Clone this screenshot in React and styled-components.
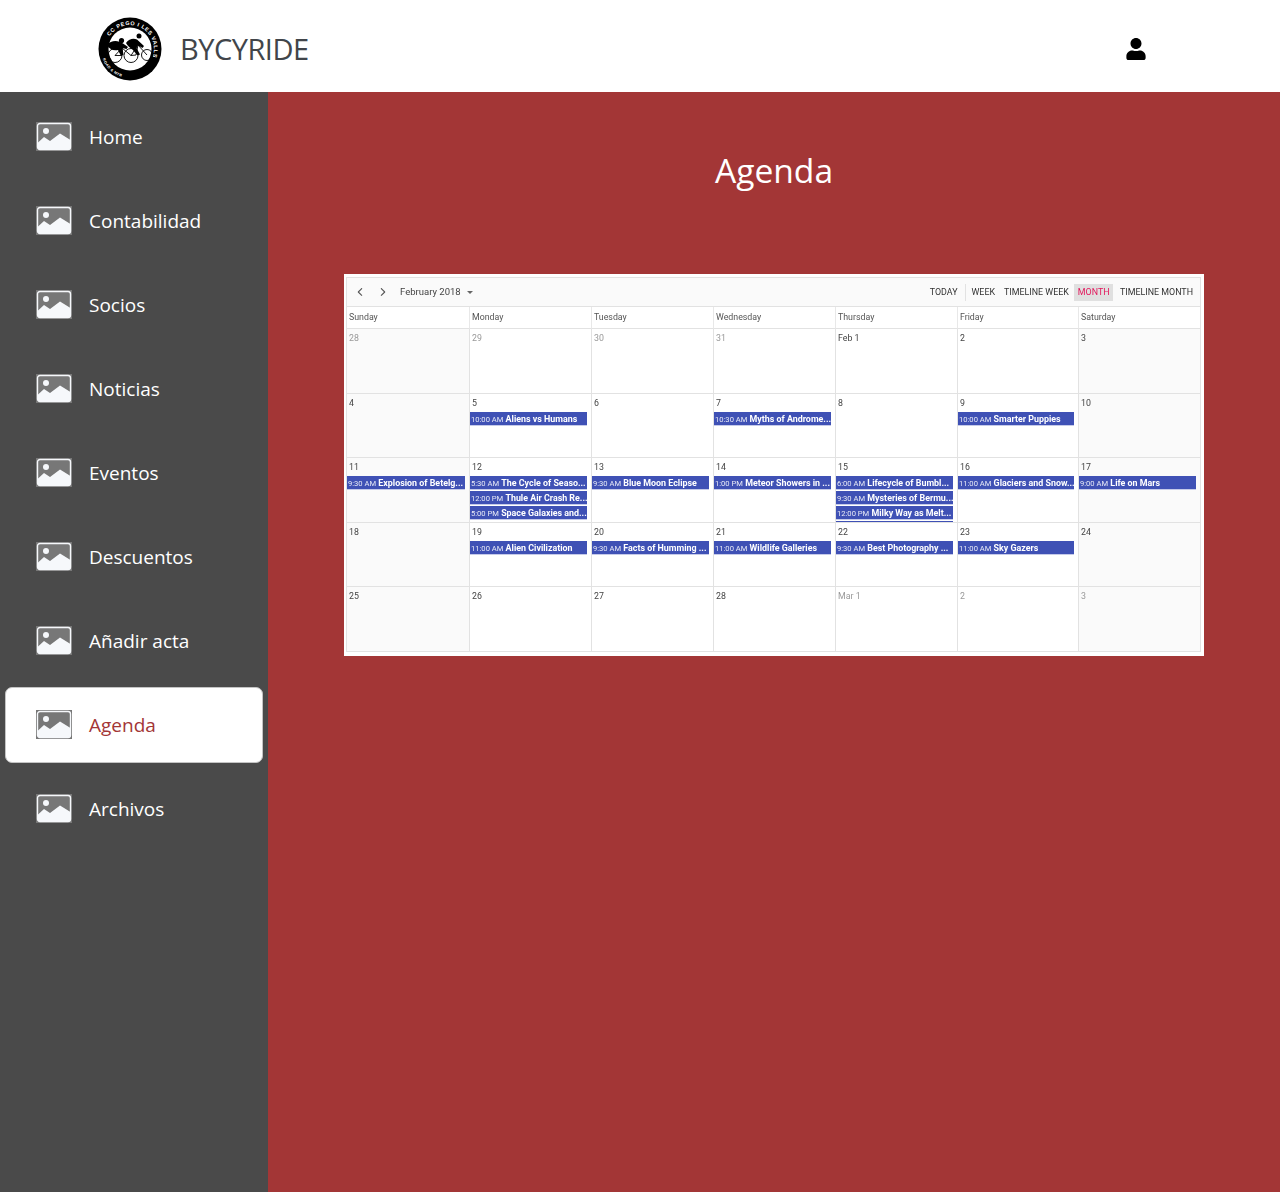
// Agenda page of the BYCYRIDE club admin
import React from "react";
import styled, { createGlobalStyle } from "styled-components";
import { FaUser } from "react-icons/fa";
import { IoIosArrowBack, IoIosArrowForward } from "react-icons/io";

const GlobalStyle = createGlobalStyle`
  html, body {
    margin: 0;
    padding: 0;
    background: #a33636;
    font-family: "Open Sans", "Noto Sans", sans-serif;
  }
  * {
    box-sizing: border-box;
  }
`;

const NAV_ITEMS = [
  "Home",
  "Contabilidad",
  "Socios",
  "Noticias",
  "Eventos",
  "Descuentos",
  "Añadir acta",
  "Agenda",
  "Archivos",
];

const WEEK_DAYS = ["Sunday", "Monday", "Tuesday", "Wednesday", "Thursday", "Friday", "Saturday"];

const VIEWS = ["WEEK", "TIMELINE WEEK", "MONTH", "TIMELINE MONTH"];

const WEEKS = [
  [
    { day: "28", muted: true },
    { day: "29", muted: true },
    { day: "30", muted: true },
    { day: "31", muted: true },
    { day: "Feb 1" },
    { day: "2" },
    { day: "3" },
  ],
  [
    { day: "4" },
    { day: "5", events: [["10:00 AM", "Aliens vs Humans"]] },
    { day: "6" },
    { day: "7", events: [["10:30 AM", "Myths of Androme..."]] },
    { day: "8" },
    { day: "9", events: [["10:00 AM", "Smarter Puppies"]] },
    { day: "10" },
  ],
  [
    { day: "11", events: [["9:30 AM", "Explosion of Betelg..."]] },
    {
      day: "12",
      events: [
        ["5:30 AM", "The Cycle of Seaso..."],
        ["12:00 PM", "Thule Air Crash Re..."],
        ["5:00 PM", "Space Galaxies and..."],
      ],
    },
    { day: "13", events: [["9:30 AM", "Blue Moon Eclipse"]] },
    { day: "14", events: [["1:00 PM", "Meteor Showers in ..."]] },
    {
      day: "15",
      events: [
        ["6:00 AM", "Lifecycle of Bumbl..."],
        ["9:30 AM", "Mysteries of Bermu..."],
        ["12:00 PM", "Milky Way as Melt..."],
        ["", ""],
      ],
    },
    { day: "16", events: [["11:00 AM", "Glaciers and Snow..."]] },
    { day: "17", events: [["9:00 AM", "Life on Mars"]] },
  ],
  [
    { day: "18" },
    { day: "19", events: [["11:00 AM", "Alien Civilization"]] },
    { day: "20", events: [["9:30 AM", "Facts of Humming ..."]] },
    { day: "21", events: [["11:00 AM", "Wildlife Galleries"]] },
    { day: "22", events: [["9:30 AM", "Best Photography ..."]] },
    { day: "23", events: [["11:00 AM", "Sky Gazers"]] },
    { day: "24" },
  ],
  [
    { day: "25" },
    { day: "26" },
    { day: "27" },
    { day: "28" },
    { day: "Mar 1", muted: true },
    { day: "2", muted: true },
    { day: "3", muted: true },
  ],
];

const PictureIcon = () => (
  <IconSvg viewBox="0 0 36 29">
    <rect width="36" height="29" fill="#777" />
    <rect x="1.5" y="1.5" width="33" height="26" rx="2.5" fill="none" stroke="#f6f8fb" strokeWidth="1.4" />
    <circle cx="10" cy="9" r="3" fill="#f6f8fb" />
    <path
      d="M1.5 21 L8 15 L14 19 L24 11.5 L34.5 18 V25 a2.5 2.5 0 0 1 -2.5 2.5 H4 a2.5 2.5 0 0 1 -2.5 -2.5 Z"
      fill="#f6f8fb"
    />
  </IconSvg>
);

const ClubLogo = () => (
  <LogoSvg viewBox="0 0 64 64">
    <defs>
      <path id="ringTop" d="M 11.65 19.28 A 24 24 0 1 1 51.66 45.77" />
      <path id="ringBottom" d="M 4.75 41.9 A 29 29 0 0 0 29.5 60.9" />
    </defs>
    <circle cx="32" cy="32" r="31.5" fill="#000" />
    <circle cx="32" cy="32" r="21.5" fill="#fff" />
    <text fontFamily="Liberation Sans, sans-serif" fontSize="5.4" fontWeight="700" fill="#fff" letterSpacing="0.6">
      <textPath href="#ringTop">CC PEGO I LES VALLS</textPath>
    </text>
    <text fontFamily="Liberation Sans, sans-serif" fontSize="3.6" fontWeight="700" fill="#fff" letterSpacing="0.4">
      <textPath href="#ringBottom">ROAD &amp; MTB</textPath>
    </text>
    <g fill="none" stroke="#000" strokeWidth="0.9">
      <circle cx="17" cy="38.5" r="7" />
      <circle cx="33" cy="38.5" r="7" />
      <circle cx="49" cy="38" r="5.5" />
      <path d="M17 38.5 L24 31 L33 38.5 M24 31 L24 38.5 L17 38.5" />
      <path d="M33 38.5 L40 28 L49 38 M40 28 L38 38 L33 38.5" />
    </g>
    <g fill="#000">
      <circle cx="23.5" cy="23.5" r="2.6" />
      <circle cx="41" cy="19" r="2.5" />
      <path d="M9 28 C13 23 20 23 25 26.5 L30 30 L28.5 32 L24.5 31 L25.5 38 L22.5 38 L20 33 C15 34 11 32 9 28 Z" />
      <path d="M28 26 C31 22 35 21 39 22.5 L46 29 L44.5 31 L39.5 28 L38.5 31 L42 37.5 L39.5 38.5 L34.5 32.5 C32 31 29.5 29 28 26 Z" />
    </g>
  </LogoSvg>
);

const Calendar = () => (
  <CalendarFrame>
    <CalendarBox>
      <Toolbar>
        <ToolbarLeft>
          <NavArrow as={IoIosArrowBack} />
          <NavArrow as={IoIosArrowForward} />
          <MonthLabel>February 2018</MonthLabel>
          <Caret />
        </ToolbarLeft>
        <ToolbarRight>
          <ViewButton>TODAY</ViewButton>
          <ToolbarDivider />
          {VIEWS.map((view) => (
            <ViewButton key={view} $active={view === "MONTH"}>
              {view}
            </ViewButton>
          ))}
        </ToolbarRight>
      </Toolbar>
      <MonthGrid>
        {WEEK_DAYS.map((name) => (
          <DayName key={name}>{name}</DayName>
        ))}
        {WEEKS.map((week) =>
          week.map((cell, i) => (
            <DayCell key={cell.day + i} $weekend={i === 0 || i === 6}>
              <DayNumber $muted={cell.muted}>{cell.day}</DayNumber>
              {(cell.events || []).map(([time, title]) => (
                <EventBar key={time}>
                  <EventTime>{time}</EventTime> <EventTitle>{title}</EventTitle>
                </EventBar>
              ))}
            </DayCell>
          ))
        )}
      </MonthGrid>
    </CalendarBox>
  </CalendarFrame>
);

const App = () => {
  return (
    <Page>
      <GlobalStyle />
      <TopBar>
        <Brand>
          <ClubLogo />
          <BrandName>BYCYRIDE</BrandName>
        </Brand>
        <UserIcon />
      </TopBar>
      <Body>
        <SideBar>
          {NAV_ITEMS.map((item) => (
            <NavItem key={item} $active={item === "Agenda"}>
              <PictureIcon />
              {item}
            </NavItem>
          ))}
        </SideBar>
        <Main>
          <Title>Agenda</Title>
          <Calendar />
        </Main>
      </Body>
    </Page>
  );
};

const Page = styled.div`
  min-height: 100vh;
  display: flex;
  flex-direction: column;
`;

const TopBar = styled.header`
  height: 92px;
  flex-shrink: 0;
  background: #fff;
  display: flex;
  align-items: center;
  justify-content: space-between;
  padding: 5px 134px 0 98px;
`;

const Brand = styled.div`
  display: flex;
  align-items: center;
  gap: 18px;
`;

const LogoSvg = styled.svg`
  width: 64px;
  height: 64px;
  display: block;
`;

const BrandName = styled.span`
  font-size: 29px;
  line-height: 40px;
  letter-spacing: -0.5px;
  color: #41454a;
  margin-top: 1px;
`;

const UserIcon = styled(FaUser)`
  width: 20px;
  height: 22px;
  color: #000;
`;

const Body = styled.div`
  flex: 1;
  display: flex;
`;

const SideBar = styled.nav`
  width: 268px;
  flex-shrink: 0;
  background: #4a4a4a;
  padding: 8px 5px 0 5px;
  display: flex;
  flex-direction: column;
  gap: 10px;
`;

const NavItem = styled.a`
  height: 76px;
  margin: -1px 0;
  display: flex;
  align-items: center;
  gap: 17px;
  padding-left: 30px;
  font-size: 19px;
  color: ${(p) => (p.$active ? "#a33636" : "#fff")};
  background: ${(p) => (p.$active ? "#fff" : "transparent")};
  border: 1px solid ${(p) => (p.$active ? "#c4c4c4" : "transparent")};
  border-radius: 7px;
`;

const IconSvg = styled.svg`
  width: 36px;
  height: 29px;
  flex-shrink: 0;
  margin-top: -2px;
`;

const Main = styled.main`
  flex: 1;
  background: #a33636;
  display: flex;
  flex-direction: column;
  align-items: center;
  padding-top: 55px;
`;

const Title = styled.h1`
  margin: 0 0 80px;
  font-size: 33.6px;
  line-height: 47px;
  font-weight: 400;
  color: #fff;
`;

const CalendarFrame = styled.div`
  width: 860px;
  height: 382px;
  background: #fff;
  padding: 3px 3px 4px 2px;
  font-family: Roboto, "Liberation Sans", sans-serif;
`;

const CalendarBox = styled.div`
  height: 100%;
  border: 1px solid #e2e2e2;
  display: flex;
  flex-direction: column;
  filter: blur(0.3px);
`;

const Toolbar = styled.div`
  height: 29px;
  flex-shrink: 0;
  background: #fafafa;
  border-bottom: 1px solid #e2e2e2;
  display: flex;
  align-items: center;
  justify-content: space-between;
  padding: 0 1.5px 0 7px;
`;

const ToolbarLeft = styled.div`
  display: flex;
  align-items: center;
`;

const NavArrow = styled.span`
  width: 12px;
  height: 12px;
  margin-right: 11px;
  color: #555;
`;

const MonthLabel = styled.span`
  font-size: 9.5px;
  color: #444;
  margin-bottom: 2px;
`;

const Caret = styled.span`
  width: 0;
  height: 0;
  margin-left: 6px;
  border-left: 3px solid transparent;
  border-right: 3px solid transparent;
  border-top: 3px solid #666;
`;

const ToolbarRight = styled.div`
  display: flex;
  align-items: center;
`;

const ToolbarDivider = styled.span`
  width: 1px;
  height: 17px;
  background: #e2e2e2;
  margin: 0 2.5px 0 1.5px;
`;

const ViewButton = styled.span`
  height: 17px;
  padding: 0 3.5px;
  margin-right: ${(p) => (p.$active ? "3.5px" : "2px")};
  display: flex;
  align-items: center;
  font-size: 8.9px;
  color: ${(p) => (p.$active ? "#e3165b" : "#333")};
  background: ${(p) => (p.$active ? "#e0e0e0" : "transparent")};
`;

const MonthGrid = styled.div`
  flex: 1;
  display: grid;
  grid-template-columns: 122px 122px 122px 122px 122px 121px 1fr;
  grid-template-rows: 22px repeat(5, 64.6px);
  overflow: hidden;
`;

const DayName = styled.div`
  border-left: 1px solid #e8e8e8;
  border-bottom: 1px solid #e2e2e2;
  padding: 5px 0 0 2px;
  font-size: 8.8px;
  color: #555;
  &:first-child {
    border-left: 0;
  }
`;

const DayCell = styled.div`
  border-left: 1px solid #e2e2e2;
  border-bottom: 1px solid #e2e2e2;
  background: ${(p) => (p.$weekend ? "#fafafa" : "#fff")};
  overflow: hidden;
  padding-right: 4px;
  min-width: 0;
  &:nth-child(7n + 1) {
    border-left: 0;
  }
`;

const DayNumber = styled.div`
  height: 18px;
  padding: 4px 0 0 2px;
  font-size: 8.8px;
  line-height: 10px;
  color: ${(p) => (p.$muted ? "#999" : "#444")};
`;

const EventBar = styled.div`
  height: 14px;
  margin-bottom: 1px;
  padding-left: 1px;
  background: #3f51b5;
  border: 1px solid #c5cae9;
  border-width: 0 0 1px 0;
  color: #fff;
  font-size: 8.9px;
  line-height: 14px;
  white-space: nowrap;
  overflow: hidden;
`;

const EventTime = styled.span`
  font-size: 7.6px;
  color: #e8eaf6;
`;

const EventTitle = styled.span`
  font-weight: 700;
`;

export default App;
